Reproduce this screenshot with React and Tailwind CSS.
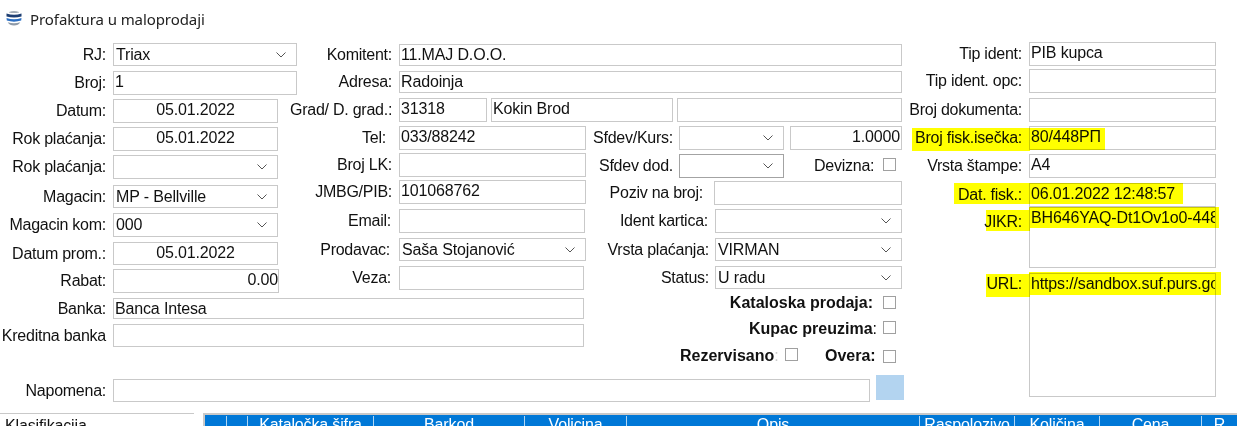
import React from 'react';

function Chevron() {
  return (
    <svg width="10" height="6" viewBox="0 0 10 6" className="shrink-0" fill="none" stroke="#555" strokeWidth="1">
      <path d="M0.5 0.5 L5 5 L9.5 0.5" />
    </svg>
  );
}

function Box({ className = '', children }) {
  return (
    <div className={`shrink-0 overflow-hidden whitespace-nowrap border border-[#c9c9c9] bg-white px-px leading-[20px] ${className}`}>
      {children}
    </div>
  );
}

function Select({ className = '', value, borderClass = 'border-[#c9c9c9]' }) {
  return (
    <div className={`flex shrink-0 items-center justify-between border bg-white pl-[2px] pr-[10px] leading-[20px] ${borderClass} ${className}`}>
      <span className="whitespace-nowrap">{value}</span>
      <Chevron />
    </div>
  );
}

function Row({ label, labelClass, className = '', children }) {
  return (
    <div className={`flex items-center ${className}`}>
      <div className={`shrink-0 whitespace-nowrap text-right tracking-[-0.25px] ${labelClass}`}>{label}</div>
      {children}
    </div>
  );
}

function Check({ className = '' }) {
  return <div className={`h-[13px] w-[13px] shrink-0 border border-[#a0a0a0] bg-white ${className}`} />;
}

function Col1() {
  const labelClass = 'w-[106px] mr-[7px]';
  return (
    <div className="w-[297px] shrink-0">
      <Row label="RJ:" labelClass={labelClass}>
        <Select className="h-[23px] w-[184px]" value="Triax" />
      </Row>
      <Row label="Broj:" labelClass={labelClass} className="mt-[5px]">
        <Box className="h-[24px] w-[184px]">1</Box>
      </Row>
      <Row label="Datum:" labelClass={labelClass} className="mt-[4px]">
        <Box className="h-[24px] w-[165px] text-center">05.01.2022</Box>
      </Row>
      <Row label="Rok plaćanja:" labelClass={labelClass} className="mt-[4px]">
        <Box className="h-[24px] w-[165px] text-center">05.01.2022</Box>
      </Row>
      <Row label="Rok plaćanja:" labelClass={labelClass} className="mt-[4px]">
        <Select className="h-[24px] w-[165px]" value="" />
      </Row>
      <Row label="Magacin:" labelClass={labelClass} className="mt-[6px]">
        <Select className="h-[23px] w-[165px]" value="MP - Bellville" />
      </Row>
      <Row label="Magacin kom:" labelClass={labelClass} className="mt-[5px]">
        <Select className="h-[24px] w-[165px]" value="000" />
      </Row>
      <Row label="Datum prom.:" labelClass={labelClass} className="mt-[5px]">
        <Box className="h-[23px] w-[165px] text-center">05.01.2022</Box>
      </Row>
      <Row label="Rabat:" labelClass={labelClass} className="mt-[4px]">
        <Box className="h-[24px] w-[166px] !pr-0 text-right">0.00</Box>
      </Row>
    </div>
  );
}

function Col2() {
  const labelClass = 'w-[102px]';
  return (
    <div className="w-[288px] shrink-0">
      <Row label="Tel:" labelClass="w-[89px] mr-[13px]">
        <Box className="h-[24px] w-[187px] leading-[18px]">033/88242</Box>
      </Row>
      <Row label="Broj LK:" labelClass={`${labelClass} pr-[7px]`} className="mt-[3px]">
        <Box className="h-[24px] w-[187px]" />
      </Row>
      <Row label="JMBG/PIB:" labelClass={`${labelClass} pr-[7px]`} className="mt-[3px]">
        <Box className="h-[24px] w-[187px] leading-[18px]">101068762</Box>
      </Row>
      <Row label="Email:" labelClass={`${labelClass} pr-[8px]`} className="mt-[5px]">
        <Box className="h-[24px] w-[186px]" />
      </Row>
      <Row label="Prodavac:" labelClass={`${labelClass} pr-[9px]`} className="mt-[5px]">
        <Select className="h-[23px] w-[187px]" value="Saša Stojanović" />
      </Row>
      <Row label="Veza:" labelClass={`${labelClass} pr-[8px]`} className="mt-[5px]">
        <Box className="h-[24px] w-[185px]" />
      </Row>
    </div>
  );
}

function Col3() {
  return (
    <div className="w-[319px] shrink-0">
      <Row label="Sfdev/Kurs:" labelClass="w-[88px] mr-[6px]">
        <Select className="h-[24px] w-[105px]" value="" />
        <Box className="ml-[6px] h-[24px] w-[112px] text-right">1.0000</Box>
      </Row>
      <Row label="Sfdev dod." labelClass="w-[88px] mr-[6px]" className="mt-[4px]">
        <Select className="h-[24px] w-[105px]" value="" borderClass="border-[#a3a3a3]" />
        <div className="ml-[30px] w-[58px] shrink-0 whitespace-nowrap text-right tracking-[-0.25px]">Devizna:</div>
        <Check className="ml-[11px] mt-[-4px]" />
      </Row>
      <Row label="Poziv na broj:" labelClass="w-[118px] mr-[11px]" className="mt-[3px]">
        <Box className="h-[24px] w-[188px]" />
      </Row>
      <Row label="Ident kartica:" labelClass="w-[123px] mr-[7px]" className="mt-[4px]">
        <Select className="h-[24px] w-[187px]" value="" />
      </Row>
      <Row label="Vrsta plaćanja:" labelClass="w-[124px] mr-[6px]" className="mt-[5px]">
        <Select className="h-[23px] w-[187px]" value="VIRMAN" />
      </Row>
      <Row label="Status:" labelClass="w-[124px] mr-[6px]" className="mt-[5px]">
        <Select className="h-[23px] w-[187px]" value="U radu" />
      </Row>
    </div>
  );
}

function Col4() {
  const labelClass = 'w-[122px] mr-[7px]';
  return (
    <div className="ml-[-4px] w-[337px] shrink-0">
      <Row label="Tip ident:" labelClass={labelClass} className="mt-[-1px]">
        <Box className="h-[24px] w-[187px]">PIB kupca</Box>
      </Row>
      <Row label="Tip ident. opc:" labelClass={labelClass} className="mt-[3px]">
        <Box className="h-[24px] w-[187px]" />
      </Row>
      <Row label="Broj dokumenta:" labelClass={labelClass} className="mt-[5px]">
        <Box className="h-[24px] w-[187px]" />
      </Row>
      <Row label="Broj fisk.isečka:" labelClass={labelClass} className="mt-[4px]">
        <Box className="h-[24px] w-[187px]">80/448РП</Box>
      </Row>
      <Row label="Vrsta štampe:" labelClass={labelClass} className="mt-[4px]">
        <Box className="h-[24px] w-[187px]">A4</Box>
      </Row>
      <Row label="Dat. fisk.:" labelClass={labelClass} className="mt-[5px]">
        <Box className="h-[24px] w-[187px]">06.01.2022 12:48:57</Box>
      </Row>
      <div className="flex items-start">
        <div className="mr-[7px] mt-[5px] w-[122px] shrink-0 text-right tracking-[-0.25px]">JIKR:</div>
        <Box className="h-[61px] w-[187px]">BH646YAQ-Dt1Ov1o0-448</Box>
      </div>
      <div className="mt-[5px] flex items-start">
        <div className="mr-[7px] mt-[1px] w-[122px] shrink-0 text-right tracking-[-0.25px]">URL:</div>
        <Box className="h-[124px] w-[187px]">https://sandbox.suf.purs.gov.rs/v/?vl=A1</Box>
      </div>
    </div>
  );
}

// marker strokes sit on top of the form
const highlights = [
  'left-[912px] top-[128px] h-[23px] w-[118px]',
  'left-[1029px] top-[128px] h-[22px] w-[76px]',
  'left-[954px] top-[183px] h-[21px] w-[229px]',
  'left-[986px] top-[210px] h-[21px] w-[44px]',
  'left-[1029px] top-[207px] h-[21px] w-[190px]',
  'left-[986px] top-[274px] h-[23px] w-[44px]',
  'left-[1029px] top-[272px] h-[23px] w-[192px]',
];

const headerCells = [
  { w: 'w-[22px]', label: '' },
  { w: 'w-[21px]', label: '' },
  { w: 'w-[126px]', label: 'Kataločka šifra' },
  { w: 'w-[151px]', label: 'Barkod' },
  { w: 'w-[102px]', label: 'Volicina' },
  { w: 'w-[293px]', label: 'Opis' },
  { w: 'w-[95px]', label: 'Raspolozivo' },
  { w: 'w-[85px]', label: 'Količina' },
  { w: 'w-[102px]', label: 'Cena' },
  { w: 'w-[36px]', label: 'R' },
];

export default function App() {
  return (
    <div className="relative h-[426px] w-[1237px] overflow-hidden bg-white font-['Liberation_Sans',Arial,sans-serif] text-[16px] leading-[20px] tracking-[-0.15px] text-[#111]">
      <div className="flex h-[43px] items-start pl-[6px] pt-[9px]">
        <svg width="16" height="16" viewBox="0 0 16 16" className="mt-px">
          <path d="M3 2 Q8 0 13 2 L13 2.6 Q8 3.6 3 2.6 Z" fill="#a5adb6" />
          <path d="M0.5 3.6 Q8 6 15.5 3.6 L15.5 6.4 Q8 8.6 0.5 6.4 Z" fill="#1f3f73" />
          <path d="M0.5 8 Q8 10.4 15.5 8 L15.2 10.6 Q8 12.8 0.8 10.6 Z" fill="#2b6fc4" />
          <path d="M1.8 12.2 Q8 14.2 14.2 12.2 Q12.5 15.5 8 15.5 Q3.5 15.5 1.8 12.2 Z" fill="#8e9aa8" />
        </svg>
        <div className="ml-[8px] font-['Noto_Sans',sans-serif] text-[15px] leading-[20px] tracking-[-0.08px] text-[#222]">Profaktura u maloprodaji</div>
      </div>

      <div className="flex">
        <div className="w-[904px] shrink-0">
          <div className="flex">
            <Col1 />
            <div className="w-[607px] shrink-0">
              <Row label="Komitent:" labelClass="w-[95px] mr-[7px]" className="mt-px">
                <Box className="h-[22px] w-[503px]">11.MAJ D.O.O.</Box>
              </Row>
              <Row label="Adresa:" labelClass="w-[95px] mr-[7px]" className="mt-[5px]">
                <Box className="h-[22px] w-[503px]">Radoinja</Box>
              </Row>
              <Row label="Grad/ D. grad.:" labelClass="ml-[-7px] w-[102px] mr-[7px]" className="mt-[5px]">
                <Box className="h-[24px] w-[88px]">31318</Box>
                <Box className="ml-[4px] h-[24px] w-[182px] leading-[18px]">Kokin Brod</Box>
                <Box className="ml-[4px] h-[24px] w-[225px]" />
              </Row>
              <div className="mt-[4px] flex">
                <Col2 />
                <Col3 />
              </div>
            </div>
          </div>

          <div className="flex">
            <div className="w-[584px] shrink-0">
              <Row label="Banka:" labelClass="w-[106px] mr-[7px]" className="mt-[5px]">
                <Box className="h-[21px] w-[471px]">Banca Intesa</Box>
              </Row>
              <Row label="Kreditna banka" labelClass="w-[106px] mr-[7px]" className="mt-[5px]">
                <Box className="h-[23px] w-[471px]" />
              </Row>
            </div>
            <div className="w-[320px] shrink-0 font-bold tracking-normal">
              <div className="flex items-center justify-end pr-[8px]">
                <span>Kataloska prodaja:</span>
                <Check className="ml-[10px] mt-[-1px]" />
              </div>
              <div className="mt-[6px] flex items-center justify-end pr-[8px]">
                <span>Kupac preuzima<span className="font-normal">:</span></span>
                <Check className="ml-[6px] mt-[-3px]" />
              </div>
              <div className="mt-[7px] flex items-center">
                <span className="ml-[96px] w-[101px] shrink-0 whitespace-nowrap">Rezervisano<span className="font-normal text-[#ccc]">:</span></span>
                <Check className="ml-[4px] mt-[-4px]" />
                <span className="ml-[27px] w-[50px] shrink-0">Overa:</span>
                <Check className="ml-[8px] mt-px" />
              </div>
            </div>
          </div>

          <div className="mt-[8px] flex">
            <Row label="Napomena:" labelClass="w-[106px] mr-[7px]" className="mt-[5px]">
              <Box className="h-[23px] w-[757px]" />
            </Row>
            <div className="ml-[6px] mt-[1px] h-[25px] w-[28px] shrink-0 bg-[#b3d4f0]" />
          </div>
        </div>
        <Col4 />
      </div>

      <div className="mt-[11px] flex">
        <div className="w-[194px] shrink-0 border-t border-[#c9c9c9] pl-[5px] pt-[2px]">Klasifikacija</div>
        <div className="ml-[9px] flex flex-1 border-l-2 border-t-2 border-[#c9c9c9] bg-[#0078d7] text-white">
          {headerCells.map((cell, i) => (
            <div key={i} className={`mt-px h-[20px] shrink-0 whitespace-nowrap border-r border-white/70 text-center leading-[18px] ${cell.w}`}>
              {cell.label}
            </div>
          ))}
        </div>
      </div>

      {highlights.map((h, i) => (
        <div key={i} className={`absolute bg-[#ffff00] mix-blend-multiply ${h}`} />
      ))}
    </div>
  );
}
